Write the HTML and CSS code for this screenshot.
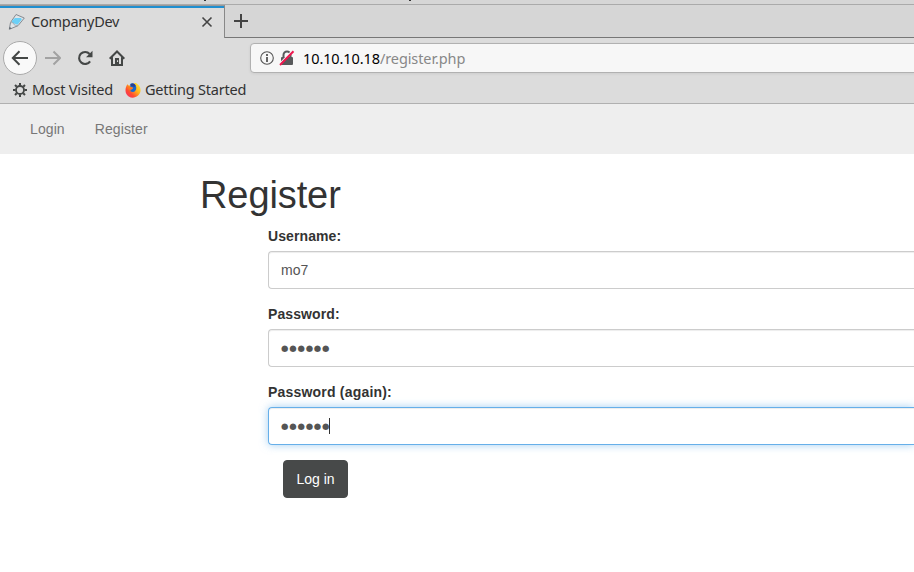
FILE: index.html
```html
<!DOCTYPE html>
<html lang="en">
<head>
<meta charset="utf-8">
<title>CompanyDev</title>
<link rel="stylesheet" href="styles.css">
</head>
<body>
<header class="chrome">
  <div class="window-edge"><i class="speck first"></i><i class="speck second"></i></div>
  <div class="tabs">
    <div class="tab">
      <svg class="favicon" width="18" height="18" viewBox="0 0 18 18"><path d="M8 1.500 16.300 5 10 12.700 1.300 16.300 2.500 9.500Z" fill="#dfe5e8" stroke="#858b92"/><path d="M4 7.800 7 5 13 5 13.800 6.500 9.600 11.700 4 9.700Z" fill="#6bd0f7"/><path d="m2.500 9.500 3 .4.9 2.100 3.600.700" fill="none" stroke="#9ba4ad" stroke-width=".8"/><path d="m1.300 16.300.4-2.400 1.900 1.400Z" fill="#555b63"/></svg>
      <span class="tab-title">CompanyDev</span>
      <svg class="close" width="12" height="12" viewBox="0 0 12 12"><path d="m1.500 1.500 9 9m0-9-9 9" fill="none" stroke="#444" stroke-width="1.600"/></svg>
    </div>
    <div class="tab-rest"><svg width="14" height="14" viewBox="0 0 14 14"><path d="M7 0v14M0 7h14" stroke="#444" stroke-width="2"/></svg></div>
  </div>
  <div class="toolbar">
    <div class="back"><svg width="18" height="18" viewBox="0 0 18 18"><path d="M17 9H2M8.500 2.200 1.800 9l6.700 6.800" fill="none" stroke="#444746" stroke-width="2"/></svg></div>
    <svg class="forward" width="16" height="16" viewBox="0 0 16 16"><path d="M0 8h15M8.500 1.500 15 8l-6.500 6.500" fill="none" stroke="#a2a2a2" stroke-width="2"/></svg>
    <svg class="reload" width="16" height="16" viewBox="0 0 16 16"><path d="M13.100 11.300A6 6 0 1 1 12.600 4" fill="none" stroke="#444746" stroke-width="2.100"/><path d="M15.500.7v6.600H9Z" fill="#444746"/></svg>
    <svg class="home" width="16" height="16" viewBox="0 0 16 16"><path d="M.7 8.800 8 1.500l7.300 7.300M3 7.200V15h10V7.200" fill="none" stroke="#444746" stroke-width="2"/><path d="M6 8h4v7H6Z" fill="#444746"/><path d="M8 10.300h1.100v1.800H8Z" fill="#dcdcdc"/></svg>
    <div class="address">
      <svg width="14" height="14" viewBox="0 0 14 14"><circle cx="7" cy="7" r="6.300" fill="none" stroke="#555" stroke-width="1.100"/><path d="M6.100 6h1.800v5H6.100ZM6.100 3.100h1.800v1.800H6.100Z" fill="#555"/></svg>
      <svg class="lock" width="16" height="16" viewBox="0 0 16 16"><path d="M4.500 8V5a3.500 3.500 0 0 1 7 0v3" fill="none" stroke="#58595b" stroke-width="2"/><rect x="2" y="7" width="12" height="8" rx="1" fill="#58595b"/><path d="M.5 13.700 13.500.5" stroke="#f7f7f7" stroke-width="1.300"/><path d="M1 15 14.500 1.200" stroke="#ee174f" stroke-width="2"/></svg>
      <span class="url"><b>10.10.10.18</b>/register.php</span>
    </div>
  </div>
  <div class="bookmarks">
    <svg class="gear" width="14" height="14" viewBox="0 0 14 14"><circle cx="7" cy="7" r="4" fill="none" stroke="#444746" stroke-width="1.800"/><path d="M7 0v2.500M7 11.500V14M0 7h2.500M11.500 7H14M2 2l1.800 1.800M10.200 10.200 12 12M12 2l-1.800 1.800M3.800 10.200 2 12" stroke="#444746" stroke-width="2"/></svg>
    <span class="visited">Most Visited</span>
    <svg class="fox" width="16" height="16" viewBox="0 0 16 16"><defs><linearGradient id="flame" x1="1" y1="0" x2="0" y2="1"><stop offset="0" stop-color="#fff24a"/><stop offset=".4" stop-color="#ffb21a"/><stop offset=".68" stop-color="#ff4c30"/><stop offset="1" stop-color="#f12a74"/></linearGradient></defs><path d="M2.300 2.200 4 3.800C9 .5 11 1 11 1c4 2.200 5.800 6.800 3.700 10.600C11.500 17.500 3 16.800.9 11 0 8 .7 5 2.300 2.200Z" fill="url(#flame)"/><path d="M5.300 2C7.500.3 11.200 2 11.300 5.800c0 2.700-1.500 4.200-3.500 4.200C6 10 4.600 8.800 4.700 7.600L7 7.500l1-1.700-2.700-.7Z" fill="#1769cf"/><path d="M5.500 2.100C7.500.8 9.500 1.500 10.500 3.300L9.500 5 6 4Z" fill="#293f91"/><path d="m2.500 4.500 3.600.4 2.200 1-2.600 1.500-.3 1.800Z" fill="#ff7820"/></svg>
    <span class="started">Getting Started</span>
  </div>
</header>
<nav class="navbar"><a>Login</a><a>Register</a></nav>
<main>
  <h1>Register</h1>
  <form>
    <label>Username:</label>
    <div class="field">mo7</div>
    <label>Password:</label>
    <div class="field"><span class="dots">●●●●●●</span></div>
    <label class="again">Password (again):</label>
    <div class="field focused"><span class="dots">●●●●●●</span><i class="caret"></i></div>
    <button type="button">Log in</button>
  </form>
</main>
</body>
</html>
```
FILE: styles.css
```css
* { box-sizing: border-box; }
body { margin: 0; width: 914px; height: 572px; overflow: hidden; background: #fff; color: #333; font: 14px/20px "Liberation Sans", sans-serif; }
svg { display: block; flex: none; }
.chrome { height: 104px; background: #dcdcdc; border-bottom: 1px solid #b0b0b0; color: #323232; font-family: "Noto Sans", sans-serif; font-size: 14.5px; letter-spacing: -.2px; }
.window-edge { height: 5px; background: #d6d6d6; border-bottom: 1px solid #aaa; display: flex; }
.speck { width: 2px; height: 1px; background: #333; }
.first { margin-left: 204px; }
.second { margin-left: 203px; }
.tabs { height: 33px; display: flex; }
.tab { width: 225px; border-top: 1px solid #999; border-right: 1px solid #888; box-shadow: inset 0 2px #208fd0; display: flex; align-items: center; padding-left: 8px; }
.tab-title { width: 88px; margin: -2px 0 0 5px; white-space: nowrap; letter-spacing: -.25px; }
.close { margin-left: 82px; }
.tab-rest { flex: 1; background: #d6d6d6; border-bottom: 1px solid #777; padding: 9px 0 0 9px; }
.toolbar { height: 39px; display: flex; align-items: center; }
.back { width: 34px; height: 34px; margin-left: 3px; border: 1px solid #aaa; border-radius: 50%; background: #f9f9f9; display: grid; place-items: center; }
.forward { margin-left: 8px; }
.reload { margin-left: 16px; }
.home { margin-left: 16px; }
.address { height: 30px; margin: 0 -5px 0 125px; flex: 1; border: 1px solid #b1b1b1; border-radius: 4px; background: #f7f7f7; box-shadow: 0 1px 3px #0001; display: flex; align-items: center; padding-left: 9px; color: #888; }
.lock { margin-left: 5px; }
.url { margin: 1px 0 0 8px; white-space: nowrap; letter-spacing: -.1px; }
.url b { color: #000; font-weight: 400; }
.bookmarks { height: 26px; display: flex; align-items: center; padding-left: 13px; white-space: nowrap; }
.visited { width: 81px; margin: -2px 0 0 5px; }
.fox { margin-left: 12px; }
.started { margin: -2px 0 0 4px; }
.navbar { height: 50px; background: #eee; display: flex; padding: 15px 30px; gap: 30px; color: #777; letter-spacing: .1px; }
main { padding: 20px 0 0 200px; }
h1 { margin: 0 0 10px; font-size: 38px; line-height: 42px; font-weight: 400; letter-spacing: -.1px; }
form { padding-left: 68px; display: flow-root; }
label { display: block; height: 20px; margin-bottom: 5px; font-weight: 700; letter-spacing: .1px; }
.again { letter-spacing: .2px; }
.field { height: 38px; margin-bottom: 15px; border: 1px solid #ccc; border-right: 0; border-radius: 4px 0 0 4px; box-shadow: inset 0 1px 1px #00000013; padding: 0 12px; color: #555; display: flex; align-items: center; }
.focused { border-color: #66afe9; box-shadow: inset 0 1px 1px #00000013, 0 0 8px #66afe999; }
.dots { width: 48px; font: 8.5px/20px "DejaVu Sans", sans-serif; letter-spacing: .8px; white-space: nowrap; }
.caret { width: 1px; height: 16px; background: #333; }
button { display: block; width: 65px; height: 38px; margin: 0 0 0 15px; padding: 0; border: 1px solid #474949; border-radius: 4px; background: #474949; color: #fff; font: 14px/20px "Liberation Sans", sans-serif; }
```
